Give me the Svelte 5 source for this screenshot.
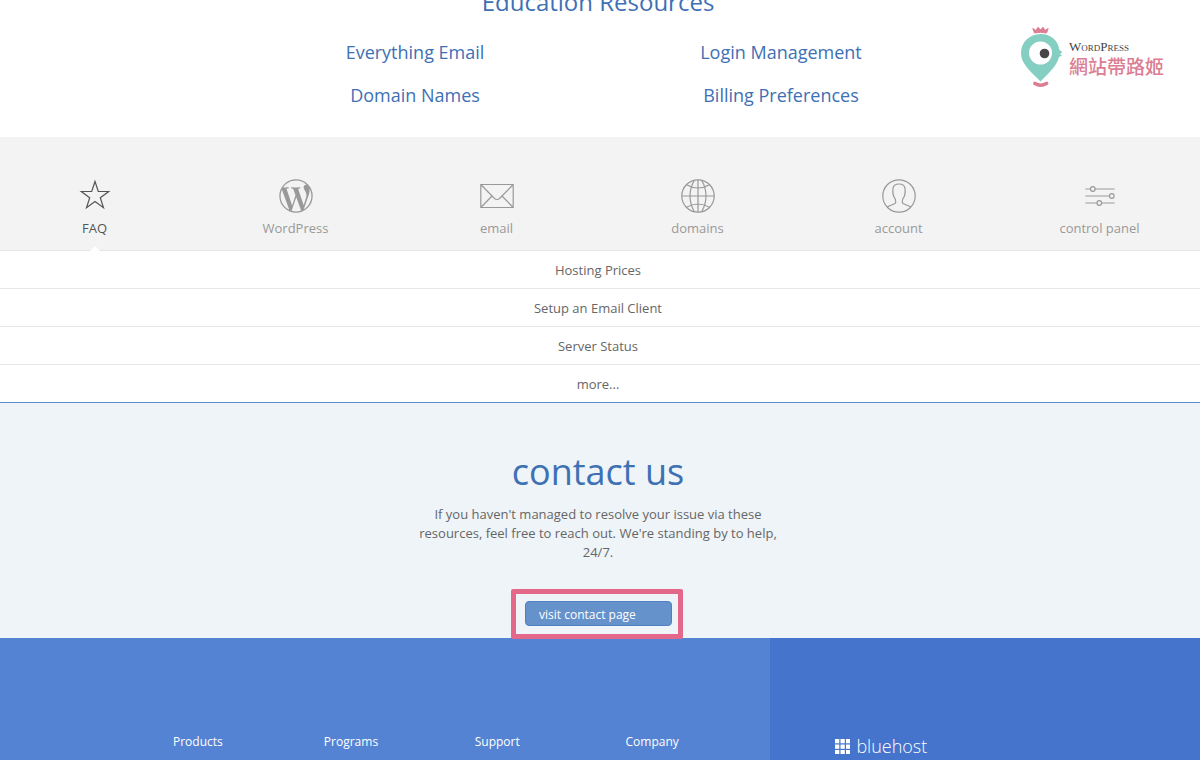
<script>
  const resources = ['Everything Email', 'Login Management', 'Domain Names', 'Billing Preferences'];
  const tabs = ['FAQ', 'WordPress', 'email', 'domains', 'account', 'control panel'];
  const questions = ['Hosting Prices', 'Setup an Email Client', 'Server Status', 'more...'];
  const footerLinks = ['Products', 'Programs', 'Support', 'Company'];
  let active = $state('FAQ');
</script>

<div class="page">
  <section class="education">
    <h2>Education Resources</h2>
    <nav class="resources" aria-label="Education Resources">
      {#each resources as item}
        <a href="#resources">{item}</a>
      {/each}
    </nav>
  </section>

  <div class="brand">
    <svg width="42" height="62" viewBox="0 0 42 62" aria-hidden="true">
      <path d="M14.500 7 L12.800 2.500 L16 4.500 L18 1.200 L20.500 4 L23 1.200 L25 4.500 L28.200 2.500 L26.500 7 Q20.500 5.500 14.500 7Z" fill="#dc7d93" stroke="#dc7d93" stroke-linejoin="round" />
      <path d="M20.500 8C9.500 8 1 16.500 1 27c0 10 7 16 19.500 28.500C32 44 37 39 39 31l3-1.500-2-1.500 2.500-2L39.500 24C38 14 30.500 8 20.500 8Z" fill="#84cfc2" />
      <circle cx="20.500" cy="27" r="11.500" fill="#fff" />
      <circle cx="24.500" cy="27.500" r="4.800" fill="#4a4648" />
      <path d="M15 57.500q5.500 3.500 11.500 0" fill="none" stroke="#dc7d93" stroke-width="3.600" stroke-linecap="round" />
    </svg>
    <div class="brand-text">
      <span class="latin">WordPress</span>
      <span class="han" lang="zh-Hant">網站帶路姬</span>
    </div>
  </div>

  <nav class="tabs" aria-label="Topics">
    {#each tabs as tab}
      <button class:active={active === tab} onclick={() => (active = tab)}>
        <svg width="36" height="36" viewBox="0 0 36 36" fill="none" stroke="currentColor" stroke-width="1.200" aria-hidden="true">
          {#if tab === 'FAQ'}
            <path d="M18 3.500l3.300 10h10.400l-8.400 6.200 3.200 10-8.500-6.100-8.500 6.100 3.200-10-8.400-6.200h10.400z" />
          {:else if tab === 'WordPress'}
            <g transform="translate(.860 .860) scale(1.428)" stroke="none">
              <circle cx="12" cy="12" r="11.700" fill="currentColor" />
              <path fill="#f3f3f3" d="M21.469 6.825c.84 1.537 1.318 3.3 1.318 5.175 0 3.979-2.156 7.456-5.363 9.325l3.295-9.527c.615-1.54.82-2.771.82-3.864 0-.405-.026-.78-.07-1.11m-7.981.105c.647-.03 1.232-.105 1.232-.105.582-.075.514-.93-.067-.899 0 0-1.755.135-2.88.135-1.064 0-2.85-.15-2.85-.15-.585-.03-.661.855-.075.885 0 0 .54.061 1.125.09l1.68 4.605-2.37 7.08L5.354 6.9c.649-.03 1.234-.1 1.234-.1.585-.075.516-.93-.065-.896 0 0-1.746.138-2.874.138-.2 0-.438-.008-.69-.015C4.911 3.15 8.235 1.215 12 1.215c2.809 0 5.365 1.072 7.286 2.833-.046-.003-.091-.009-.141-.009-1.06 0-1.812.923-1.812 1.914 0 .89.513 1.643 1.06 2.531.411.72.89 1.643.89 2.977 0 .915-.354 1.994-.821 3.479l-1.075 3.585-3.9-11.61.001.014zM12 22.784c-1.059 0-2.081-.153-3.048-.437l3.237-9.406 3.315 9.087c.024.053.05.101.078.149-1.12.393-2.325.609-3.582.609M1.211 12c0-1.564.336-3.05.935-4.39L7.29 21.709C3.694 19.96 1.212 16.271 1.211 12" />
            </g>
          {:else if tab === 'email'}
            <path d="M1.800 6.500h32.400v23h-32.400zM1.800 6.500l13.700 14q2.500 2 5 0l13.700-14M1.800 29.500l11.200-11.500M34.200 29.500l-11.200-11.500" />
          {:else if tab === 'domains'}
            <circle cx="18" cy="18" r="16.200" />
            <path d="M18 1.800v32.400M1.800 18h32.400M14.500 2C8.500 12 8.500 24 14.500 34M21.500 2c6 10 6 22 0 32M6 6.500q12 7 24 0M6 29.500q12-7 24 0" />
          {:else if tab === 'account'}
            <circle cx="18" cy="18" r="16.200" />
            <path d="M6 29l7.500-3.200q1.500-.700 1.200-2.300l-.4-2.300C12 18 11.500 14 12 10.500 12.400 7.500 15 6 18 6s5.600 1.500 6 4.500c.5 3.500 0 7.500-2.300 10.700l-.4 2.300q-.3 1.600 1.200 2.300L30 29" />
          {:else}
            <path d="M3.500 11h5M13 11h19.500M3.500 18h24M3.500 25h11.500M19.500 25h13" />
            <circle cx="10.800" cy="11" r="2.300" />
            <circle cx="29.800" cy="18" r="2.300" />
            <circle cx="17.300" cy="25" r="2.300" />
          {/if}
        </svg>
        <span>{tab}</span>
      </button>
    {/each}
  </nav>

  <ul class="questions">
    {#each questions as q}
      <li><a href="#faq">{q}</a></li>
    {/each}
  </ul>

  <section class="contact">
    <h1>contact us</h1>
    <p>If you haven't managed to resolve your issue via these resources, feel free to reach out. We're standing by to help, 24/7.</p>
    <div class="highlight">
      <a class="visit" href="#contact">visit contact page</a>
    </div>
  </section>

  <footer>
    <nav class="links" aria-label="Footer">
      {#each footerLinks as link}
        <a href="#footer">{link}</a>
      {/each}
    </nav>
    <div class="host">
      <svg width="15" height="15" viewBox="0 0 15 15" fill="#fff" aria-hidden="true">
        {#each [0, 5.5, 11] as y}
          {#each [0, 5.5, 11] as x}
            <rect {x} {y} width="4.300" height="4.300" />
          {/each}
        {/each}
      </svg>
      <span>bluehost</span>
    </div>
  </footer>
</div>

<style>
  :global(body) {
    margin: 0;
    background: #fff;
  }
  .page {
    position: relative;
    display: flex;
    flex-direction: column;
    min-height: 100vh;
    overflow: hidden;
    font-family: 'Open Sans', sans-serif;
    font-size: 13px;
    color: #666;
  }
  a {
    color: inherit;
    text-decoration: none;
  }
  h1,
  h2,
  p,
  ul {
    margin: 0;
    padding: 0;
    font-weight: 400;
  }
  .education {
    padding: 0 4px 8px 0;
    text-align: center;
    color: #3e70b4;
  }
  h2 {
    margin-top: -14px;
    font-size: 24px;
    line-height: 32px;
  }
  .resources {
    display: grid;
    grid-template-columns: 1fr 1fr;
    row-gap: 15px;
    max-width: 732px;
    margin: 0 auto;
    padding: 20px 0;
    font-size: 18px;
    line-height: 28px;
  }
  .brand {
    position: absolute;
    top: 26px;
    right: 36px;
    display: flex;
    gap: 7px;
  }
  .brand-text {
    display: flex;
    flex-direction: column;
    padding-top: 13px;
  }
  .latin {
    font-family: 'Liberation Serif', serif;
    font-variant: small-caps;
    font-size: 13px;
    line-height: 16px;
    color: #444;
  }
  .han {
    font-family: 'Noto Sans CJK TC', sans-serif;
    font-weight: 500;
    font-size: 19px;
    line-height: 22px;
    color: #dc7d93;
  }
  .tabs {
    display: grid;
    grid-template-columns: repeat(6, 1fr);
    padding-top: 41px;
    margin-right: -6px;
    background: #f3f3f3;
    border-bottom: 1px solid #e4e4e4;
  }
  .tabs button {
    position: relative;
    left: -6px;
    display: flex;
    flex-direction: column;
    align-items: center;
    gap: 4px;
    height: 72px;
    padding: 0;
    border: 0;
    background: none;
    font: inherit;
    line-height: 20px;
    color: #999;
    cursor: pointer;
  }
  .tabs button.active {
    color: #555;
  }
  .tabs button.active::after {
    content: '';
    position: absolute;
    bottom: -1px;
    border: 5px solid transparent;
    border-top: 0;
    border-bottom-color: #fff;
  }
  .questions {
    list-style: none;
    text-align: center;
    border-bottom: 1px solid #5b8bd0;
  }
  .questions li {
    padding: 10px 4px 8px 0;
    line-height: 19px;
    border-bottom: 1px solid #e6e6e6;
  }
  .questions li:last-child {
    border-bottom: 0;
  }
  .contact {
    display: flex;
    flex-direction: column;
    align-items: center;
    padding: 44px 4px 0 0;
    text-align: center;
    background: #eef4f8;
  }
  h1 {
    font-size: 36px;
    line-height: 50px;
    color: #3e70b4;
  }
  .contact p {
    max-width: 380px;
    margin-top: 8px;
    line-height: 19px;
  }
  .highlight {
    position: relative;
    margin: 27px 2px -1px 0;
    padding: 7px 6px 8px 9px;
    border: 5px solid #e4688a;
    border-radius: 2px;
  }
  .visit {
    display: block;
    box-sizing: border-box;
    width: 147px;
    padding: 3px 13px 1px;
    border: 1px solid #4f81c2;
    border-radius: 4px;
    background: #6592cb;
    font-size: 12px;
    line-height: 19px;
    text-align: left;
    white-space: nowrap;
    color: #fff;
  }
  footer {
    display: flex;
    flex: 1;
    background: #4474cc;
    color: #fff;
  }
  .links {
    display: grid;
    grid-template-columns: repeat(4, 1fr);
    box-sizing: border-box;
    width: 64.2%;
    padding: 94px 0 8px 173px;
    background: #5583d3;
    font-size: 12px;
    line-height: 20px;
    column-gap: 6px;
  }
  .host {
    display: flex;
    align-items: center;
    align-self: flex-start;
    gap: 6px;
    padding: 96px 0 0 65px;
    font-size: 18px;
    font-weight: 300;
    line-height: 24px;
  }
</style>
